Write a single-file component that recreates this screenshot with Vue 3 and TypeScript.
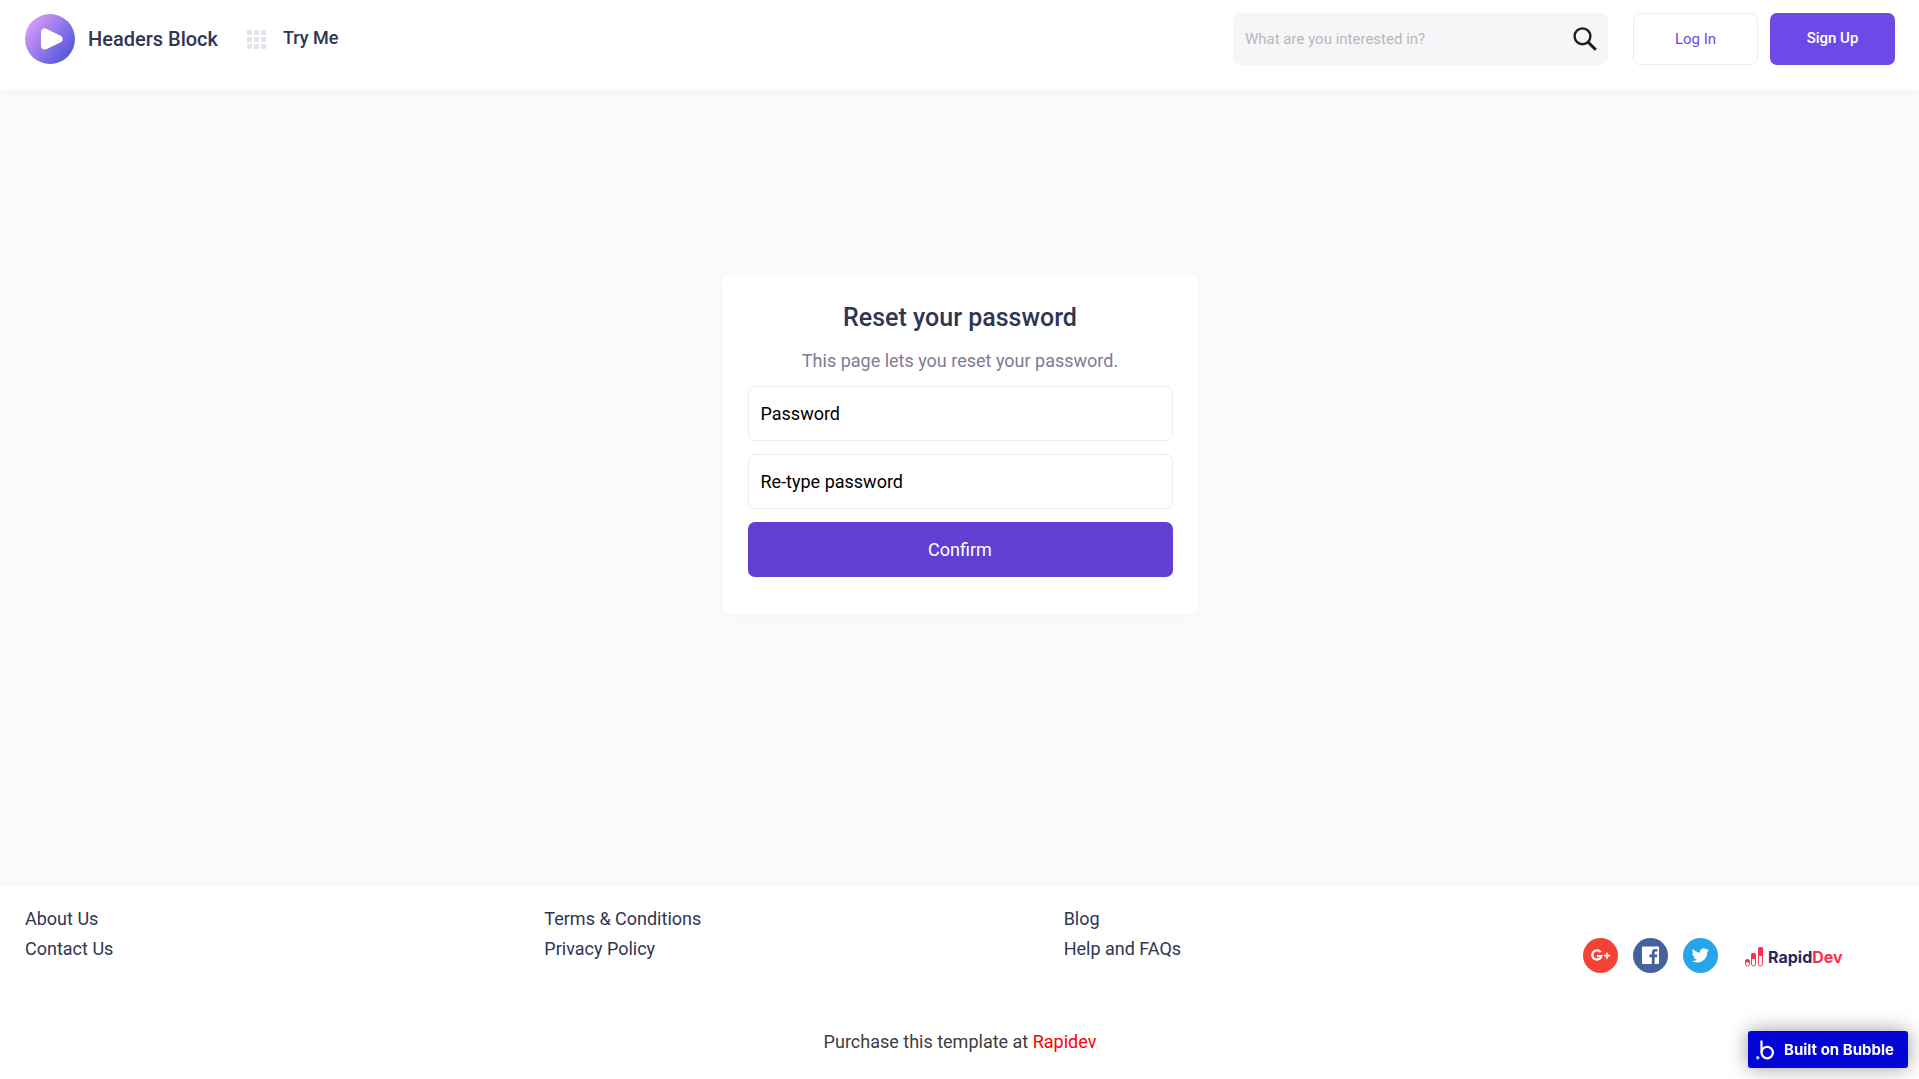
<script setup lang="ts">
import { ref } from 'vue'

interface FooterLink {
  label: string
  href: string
}

const search = ref('')
const password = ref('')
const confirmation = ref('')

const footerColumns: FooterLink[][] = [
  [
    { label: 'About Us', href: '#about' },
    { label: 'Contact Us', href: '#contact' },
  ],
  [
    { label: 'Terms & Conditions', href: '#terms' },
    { label: 'Privacy Policy', href: '#privacy' },
  ],
  [
    { label: 'Blog', href: '#blog' },
    { label: 'Help and FAQs', href: '#help' },
  ],
]

const gridDots = [0, 7, 14].flatMap((y) => [0, 7, 14].map((x) => ({ x, y })))
</script>

<template>
  <div class="page">
    <header class="header">
      <a class="brand" href="#home">
        <svg class="brand-mark" viewBox="0 0 50 50" aria-hidden="true">
          <defs>
            <linearGradient id="brand-fill" x1="0.1" y1="0.15" x2="0.9" y2="0.8">
              <stop offset="0" stop-color="#d59bf8" />
              <stop offset="1" stop-color="#5658dc" />
            </linearGradient>
          </defs>
          <circle cx="25" cy="25" r="25" fill="url(#brand-fill)" />
          <path
            d="M20 18.500V31.500L33.500 25Z"
            fill="#fff"
            stroke="#fff"
            stroke-width="8"
            stroke-linejoin="round"
          />
        </svg>
        <span>Headers Block</span>
      </a>
      <a class="try" href="#try">
        <svg class="try-icon" viewBox="0 0 19 19" aria-hidden="true">
          <rect
            v-for="dot in gridDots"
            :key="`${dot.x}-${dot.y}`"
            :x="dot.x"
            :y="dot.y"
            width="5"
            height="5"
            rx="1"
            fill="#e4e2ea"
          />
        </svg>
        <span>Try Me</span>
      </a>
      <form class="search" role="search" @submit.prevent>
        <input
          v-model="search"
          type="text"
          aria-label="Search"
          placeholder="What are you interested in?"
        />
        <button type="submit" aria-label="Search">
          <svg viewBox="0 0 24 24" aria-hidden="true">
            <circle cx="9.500" cy="9.300" r="7.900" fill="none" stroke="#1d1d1f" stroke-width="2.400" />
            <path d="M15.200 15.200L22.800 22.800" stroke="#1d1d1f" stroke-width="3" />
          </svg>
        </button>
      </form>
      <div class="account">
        <button class="login" type="button">Log In</button>
        <button class="signup" type="button">Sign Up</button>
      </div>
    </header>

    <main class="main">
      <form class="card" @submit.prevent>
        <h1>Reset your password</h1>
        <p>This page lets you reset your password.</p>
        <input
          v-model="password"
          type="password"
          aria-label="Password"
          placeholder="Password"
        />
        <input
          v-model="confirmation"
          type="password"
          aria-label="Re-type password"
          placeholder="Re-type password"
        />
        <button type="submit">Confirm</button>
      </form>
    </main>

    <footer class="footer">
      <div class="footer-columns">
        <nav v-for="(column, index) in footerColumns" :key="index" class="footer-links">
          <a v-for="link in column" :key="link.label" :href="link.href">{{ link.label }}</a>
        </nav>
        <div class="social">
          <a href="#google" aria-label="Google Plus">
            <svg viewBox="0 0 35 35" aria-hidden="true">
              <circle cx="17.500" cy="17.500" r="17.500" fill="#f44336" />
              <path
                d="M17.600 14.200A4.600 4.600 0 1 0 18.400 18H14"
                fill="none"
                stroke="#fff"
                stroke-width="2.200"
              />
              <path d="M24 14.700V20.700M21 17.700H27" stroke="#fff" stroke-width="1.700" />
            </svg>
          </a>
          <a href="#facebook" aria-label="Facebook">
            <svg viewBox="0 0 35 35" aria-hidden="true">
              <circle cx="17.500" cy="17.500" r="17.500" fill="#44619d" />
              <path
                d="M10 8.500H25A1 1 0 0 1 26 9.500V25A1 1 0 0 1 25 26H21.600V19.300H24L24.400 16.600H21.600V14.900C21.600 14 22 13.600 22.900 13.600H24.400V11.100C24 11 23.200 11 22.400 11C20.100 11 18.800 12.300 18.800 14.600V16.600H16.400V19.300H18.800V26H10A1 1 0 0 1 9 25V9.500A1 1 0 0 1 10 8.500Z"
                fill="#fff"
              />
            </svg>
          </a>
          <a href="#twitter" aria-label="Twitter">
            <svg viewBox="0 0 35 35" aria-hidden="true">
              <circle cx="17.500" cy="17.500" r="17.500" fill="#26a6e8" />
              <path
                transform="translate(8.700 8.800) scale(0.720)"
                d="M23.950 4.570a10 10 0 0 1-2.820.780 4.960 4.960 0 0 0 2.160-2.730c-.950.560-2 .960-3.130 1.190a4.920 4.920 0 0 0-8.380 4.480C7.690 8.100 4.070 6.130 1.640 3.160a4.820 4.820 0 0 0-.670 2.480c0 1.710.870 3.210 2.190 4.100a4.900 4.900 0 0 1-2.230-.620v.060a4.920 4.920 0 0 0 3.950 4.830 5 5 0 0 1-2.210.080 4.940 4.940 0 0 0 4.600 3.420A9.870 9.870 0 0 1 0 19.540a13.990 13.990 0 0 0 7.550 2.210c9.050 0 14-7.500 14-13.980 0-.210 0-.420-.020-.630a9.940 9.940 0 0 0 2.460-2.550z"
                fill="#fff"
              />
            </svg>
          </a>
          <a class="rapid" href="#rapiddev">
            <svg viewBox="0 0 18 20" aria-hidden="true">
              <g fill="#fff" stroke="#fb3b54" stroke-width="1">
                <rect x="0.500" y="12.500" width="4" height="6.500" rx="2" />
                <rect x="6.500" y="6.500" width="4" height="12.500" rx="2" />
                <rect x="13.500" y="0.500" width="4" height="18.500" rx="2" />
              </g>
              <g fill="#fb2f4d">
                <rect x="0.500" y="12.500" width="4" height="3" rx="1" />
                <rect x="6" y="6" width="5" height="6" rx="2" />
                <rect x="13" y="0" width="5" height="9" rx="2" />
              </g>
            </svg>
            <span class="rapid-name">Rapid<em>Dev</em></span>
          </a>
        </div>
      </div>
      <p class="purchase">Purchase this template at <a href="#rapidev">Rapidev</a></p>
    </footer>

    <a class="bubble" href="#bubble">
      <svg viewBox="0 0 18 20" aria-hidden="true">
        <circle cx="11.200" cy="12.600" r="5.700" fill="none" stroke="#fff" stroke-width="2.200" />
        <path d="M5.500 0.500V12.600" stroke="#fff" stroke-width="2.200" />
        <circle cx="1.800" cy="17.700" r="1.700" fill="#8fe4f2" />
      </svg>
      <span>Built on Bubble</span>
    </a>
  </div>
</template>

<style>
body {
  margin: 0;
}
</style>

<style scoped>
.page {
  display: flex;
  flex-direction: column;
  min-height: 100vh;
  background: #fafafa;
  font-family: Roboto, "Liberation Sans", sans-serif;
  font-size: 18px;
  color: #2f3553;
}

.page *,
.page {
  box-sizing: border-box;
}

a {
  color: inherit;
  text-decoration: none;
}

button,
input {
  font-family: inherit;
  border-radius: 7px;
}

button {
  padding: 0;
  border: 0;
  cursor: pointer;
}

.header {
  display: flex;
  align-items: flex-start;
  height: 90px;
  padding: 13px 24px 0 25px;
  background: #fff;
  box-shadow: 0 2px 15px rgba(0, 0, 0, 0.03);
}

.brand,
.try {
  display: flex;
  align-items: center;
  height: 52px;
  font-size: 20px;
  font-weight: 500;
}

.brand {
  gap: 13px;
  margin-right: 29px;
}

.brand-mark {
  width: 50px;
  height: 50px;
}

.try {
  gap: 17px;
  font-size: 18px;
}

.try span {
  padding-bottom: 4px;
}

.try-icon {
  width: 19px;
  height: 19px;
}

.search {
  display: flex;
  align-items: center;
  width: 375px;
  height: 52px;
  margin-left: auto;
  padding-right: 11px;
  background: #f6f6f9;
  border-radius: 7px;
}

.search input {
  flex: 1;
  min-width: 0;
  height: 52px;
  padding: 0 12px;
  border: 0;
  background: transparent;
  font-size: 15px;
}

.search input::placeholder {
  color: #b8b8b8;
}

.search button {
  display: flex;
  background: transparent;
}

.search svg {
  width: 24px;
  height: 24px;
}

.account {
  display: flex;
  gap: 12px;
  margin-left: 25px;
}

.account button {
  width: 125px;
  height: 52px;
  font-size: 15px;
}

.login {
  border: 1px solid #ececee;
  background: #fff;
  color: #6b4ae8;
}

.account .signup {
  padding-bottom: 2px;
  background: #6b4ae8;
  color: #fff;
  font-weight: 500;
}

.main {
  flex: 1;
  padding: 185px 24px 50px 25px;
}

.card {
  display: flex;
  flex-direction: column;
  gap: 13px;
  width: 100%;
  max-width: 475px;
  margin: 0 auto;
  padding: 25px 25px 37px;
  background: #fff;
  border-radius: 7px;
  box-shadow: 0 2px 15px rgba(0, 0, 0, 0.02);
}

.card h1 {
  margin: 0;
  font-size: 25px;
  font-weight: 500;
  line-height: 35px;
  text-align: center;
}

.card p {
  margin: 0;
  color: #7f7b93;
  line-height: 25px;
  text-align: center;
}

.card input {
  height: 55px;
  padding: 0 12px;
  border: 1px solid #ececee;
  background: #fff;
  font-size: 18px;
}

.card input::placeholder {
  color: #000;
}

.card button {
  height: 55px;
  background: #6140d1;
  color: #fff;
  font-size: 18px;
}

.footer {
  padding: 18px 24px 22px 25px;
  background: #fff;
}

.footer-columns {
  display: grid;
  grid-template-columns: repeat(4, minmax(0, 312px));
  justify-content: space-between;
}

.footer-links {
  display: flex;
  flex-direction: column;
  align-items: flex-start;
  line-height: 30px;
}

.social {
  display: flex;
  align-items: center;
  gap: 15px;
  margin-top: 34px;
}

.social > a {
  display: flex;
}

.social > a > svg {
  width: 35px;
  height: 35px;
}

.social .rapid {
  align-items: center;
  gap: 5px;
  margin-left: 12px;
  padding-top: 2px;
}

.social .rapid svg {
  width: 18px;
  height: 20px;
}

.rapid-name {
  color: #292861;
  font-family: Inter, "Liberation Sans", sans-serif;
  font-size: 16px;
  font-weight: 700;
  line-height: 20px;
}

.rapid-name em {
  color: #fb2f4d;
  font-style: normal;
}

.purchase {
  margin: 54px 0 0;
  color: #3d3d3d;
  line-height: 30px;
  text-align: center;
}

.purchase a {
  color: #f00;
}

.bubble {
  position: fixed;
  right: 11px;
  bottom: 11px;
  display: flex;
  align-items: center;
  gap: 10px;
  width: 160px;
  height: 37px;
  padding-left: 8px;
  border-radius: 3px;
  background: #0205d3;
  box-shadow: 0 0 20px rgba(0, 0, 0, 0.4);
  color: #fff;
  font-family: Inter, "Liberation Sans", sans-serif;
  font-size: 15px;
  font-weight: 700;
  white-space: nowrap;
}

.bubble svg {
  width: 18px;
  height: 20px;
}
</style>
